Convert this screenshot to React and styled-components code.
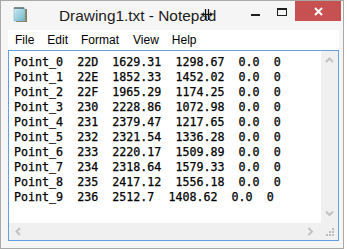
import React from 'react';
import styled, { createGlobalStyle } from 'styled-components';

const GlobalStyle = createGlobalStyle`
  html, body {
    margin: 0;
    padding: 0;
    background: #ffffff;
  }
  * {
    box-sizing: border-box;
  }
`;

const lines = [
  'Point_0  22D  1629.31  1298.67  0.0  0',
  'Point_1  22E  1852.33  1452.02  0.0  0',
  'Point_2  22F  1965.29  1174.25  0.0  0',
  'Point_3  230  2228.86  1072.98  0.0  0',
  'Point_4  231  2379.47  1217.65  0.0  0',
  'Point_5  232  2321.54  1336.28  0.0  0',
  'Point_6  233  2220.17  1509.89  0.0  0',
  'Point_7  234  2318.64  1579.33  0.0  0',
  'Point_8  235  2417.12  1556.18  0.0  0',
  'Point_9  236  2512.7  1408.62  0.0  0',
];

const Window = styled.div`
  position: relative;
  width: 344px;
  height: 249px;
  background: #f5f5f5;
  border: 1px solid #a8a8a8;
  display: flex;
  flex-direction: column;
  padding: 0 2px 7px 7px;
`;

const TitleBar = styled.div`
  height: 29px;
  display: flex;
  align-items: flex-start;
  font-family: "Liberation Sans", Arial, sans-serif;
`;

const AppIcon = styled.svg`
  margin: 5px 0 0 4px;
  flex-shrink: 0;
`;

const Title = styled.div`
  margin: 6px 0 0 31px;
  font-size: 15.4px;
  line-height: 18px;
  color: #1b1b1b;
  white-space: nowrap;
`;

const Spacer = styled.div`
  flex: 1;
`;

const WinButton = styled.div`
  width: ${p => p.w}px;
  height: 20px;
  display: flex;
  align-items: center;
  justify-content: center;
  background: ${p => (p.close ? '#c75050' : 'transparent')};
`;

const MinGlyph = styled.div`
  width: 9px;
  height: 2px;
  margin-top: 7px;
  background: #1f1f1f;
`;

const MaxGlyph = styled.div`
  width: 10px;
  height: 8px;
  margin-top: 2px;
  border: 1px solid #1f1f1f;
  border-top-width: 2px;
`;

const Cursor = styled.svg`
  position: absolute;
  left: 199px;
  top: 7px;
`;

const Client = styled.div`
  flex: 1;
  display: flex;
  flex-direction: column;
  width: 331px;
`;

const MenuBar = styled.div`
  height: 20px;
  background: #ffffff;
  display: flex;
  align-items: center;
  font-family: "Liberation Sans", Arial, sans-serif;
  font-size: 12px;
  color: #000000;
  padding-left: 7px;
`;

const MenuItem = styled.span`
  margin-right: ${p => p.gap}px;
  line-height: 20px;
`;

const Editor = styled.div`
  flex: 1;
  border: 1px solid #62a0e2;
  background: #ffffff;
  display: grid;
  grid-template-columns: 1fr 17px;
  grid-template-rows: 1fr 17px;
  min-height: 0;
`;

const TextArea = styled.pre`
  margin: 0;
  padding: 4px 0 0 5px;
  font-family: "DejaVu Sans Mono", "Liberation Mono", monospace;
  font-size: 11.66px;
  line-height: 15px;
  color: #000000;
  -webkit-text-stroke: 0.25px #000000;
  overflow: hidden;
`;

const VScroll = styled.div`
  background: #f0f0f0;
  display: flex;
  flex-direction: column;
  justify-content: space-between;
  align-items: center;
  padding: 6px 0 6px;
`;

const HScroll = styled.div`
  background: #f0f0f0;
  display: flex;
  justify-content: space-between;
  align-items: center;
  padding: 0 7px 0 6px;
`;

const Corner = styled.div`
  background: #f0f0f0;
  display: flex;
  align-items: flex-end;
  justify-content: flex-end;
  padding: 0 3px 3px 0;
`;

const Chevron = ({ dir }) => {
  const paths = {
    up: 'M1 5 L4.5 1.5 L8 5',
    down: 'M1 1.5 L4.5 5 L8 1.5',
    left: 'M5 1 L1.5 4.5 L5 8',
    right: 'M1.5 1 L5 4.5 L1.5 8',
  };
  const horiz = dir === 'left' || dir === 'right';
  return (
    <svg width={horiz ? 7 : 9} height={horiz ? 9 : 7} viewBox={horiz ? '0 0 7 9' : '0 0 9 7'}>
      <path d={paths[dir]} fill="none" stroke="#c2c2c2" strokeWidth="2" />
    </svg>
  );
};

function NotepadIcon() {
  return (
    <AppIcon width="16" height="17" viewBox="0 0 16 17">
      <defs>
        <linearGradient id="pg" x1="0" y1="0" x2="1" y2="1">
          <stop offset="0" stopColor="#cfeef6" />
          <stop offset="1" stopColor="#6fb3c9" />
        </linearGradient>
      </defs>
      <rect x="4" y="3" width="11" height="13" fill="#8a7a55" />
      <rect x="2" y="2" width="11" height="13" fill="url(#pg)" stroke="#7fb6c6" strokeWidth="0.6" />
      <path d="M4 6h7M4 8.5h7M4 11h7" stroke="#9fcfdd" strokeWidth="0.8" />
      <path d="M3 1v2M5 1v2M7 1v2M9 1v2M11 1v2" stroke="#333" strokeWidth="1" />
    </AppIcon>
  );
}

function SizeGrip() {
  const dots = [[8, 2], [5, 5], [8, 5], [2, 8], [5, 8], [8, 8]];
  return (
    <svg width="10" height="10" viewBox="0 0 10 10">
      {dots.map(([x, y], i) => (
        <rect key={i} x={x - 1} y={y - 1} width="2" height="2" fill="#bcbcbc" />
      ))}
    </svg>
  );
}

export default function App() {
  return (
    <>
      <GlobalStyle />
      <Window>
        <TitleBar>
          <NotepadIcon />
          <Title>Drawing1.txt - Notepad</Title>
          <Spacer />
          <WinButton w={26}><MinGlyph /></WinButton>
          <WinButton w={27}><MaxGlyph /></WinButton>
          <WinButton w={46} close>
            <svg width="9" height="9" viewBox="0 0 9 9">
              <path d="M1 1L8 8M8 1L1 8" stroke="#ffffff" strokeWidth="2" />
            </svg>
          </WinButton>
        </TitleBar>
        <Cursor width="14" height="14" viewBox="0 0 14 14">
          <path d="M1 6.5L4 3.5V5.5H10V3.5L13 6.5L10 9.5V7.5H4V9.5Z" fill="#111" stroke="#fff" strokeWidth="0.6" />
          <path d="M5.5 1V12M8.5 1V12" stroke="#111" strokeWidth="1.3" />
        </Cursor>
        <Client>
          <MenuBar>
            <MenuItem gap={13}>File</MenuItem>
            <MenuItem gap={13}>Edit</MenuItem>
            <MenuItem gap={14}>Format</MenuItem>
            <MenuItem gap={13}>View</MenuItem>
            <MenuItem gap={0}>Help</MenuItem>
          </MenuBar>
          <Editor>
            <TextArea>{lines.join('\n')}</TextArea>
            <VScroll>
              <Chevron dir="up" />
              <Chevron dir="down" />
            </VScroll>
            <HScroll>
              <Chevron dir="left" />
              <Chevron dir="right" />
            </HScroll>
            <Corner><SizeGrip /></Corner>
          </Editor>
        </Client>
      </Window>
    </>
  );
}
